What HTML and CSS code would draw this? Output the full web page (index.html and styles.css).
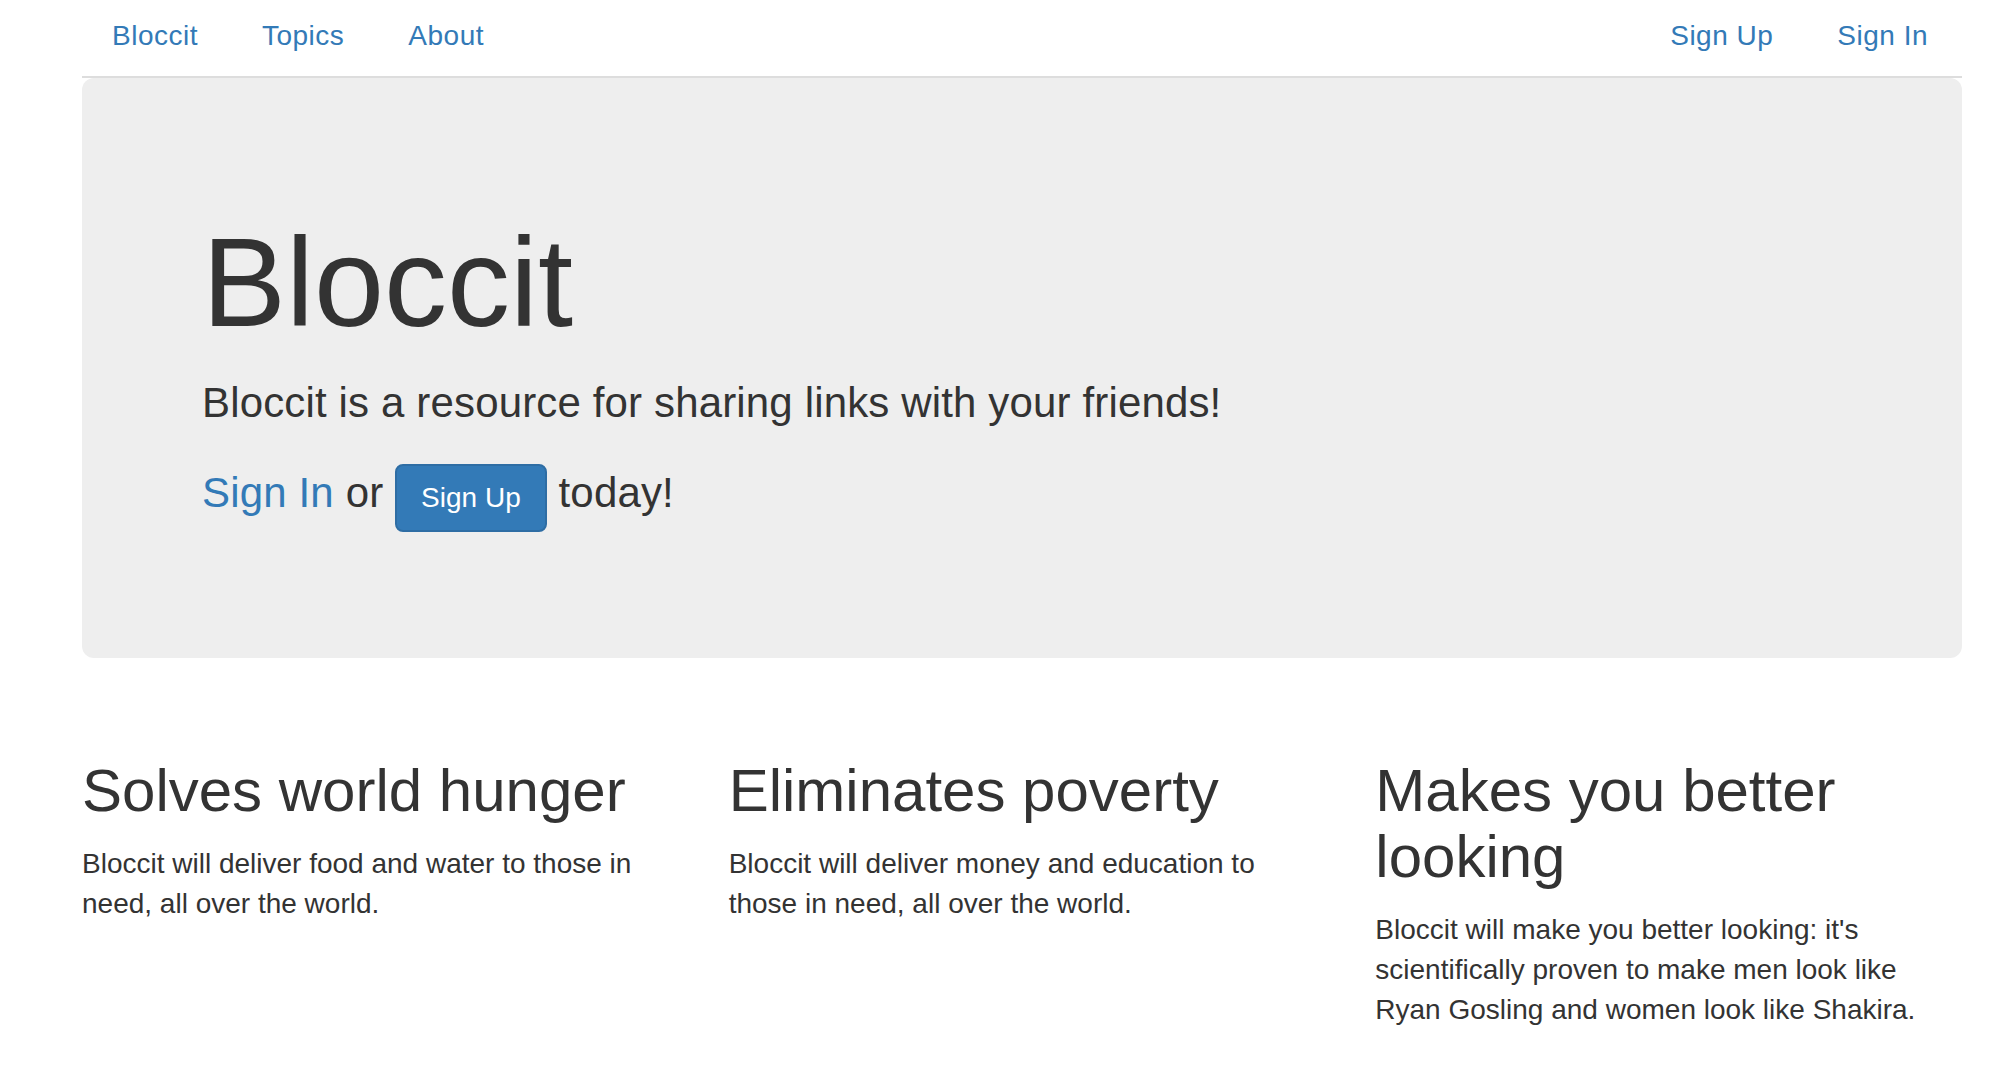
FILE: index.html
```html
<!DOCTYPE html>
<html lang="en">
<head>
<meta charset="utf-8">
<title>Bloccit</title>
<link rel="stylesheet" href="styles.css">
</head>
<body>
<div class="container">
  <ul class="nav">
    <li><a href="#">Bloccit</a></li>
    <li><a href="#">Topics</a></li>
    <li><a href="#">About</a></li>
    <li class="push"><a href="#">Sign Up</a></li>
    <li><a href="#">Sign In</a></li>
  </ul>

  <div class="jumbotron">
    <h1>Bloccit</h1>
    <p>Bloccit is a resource for sharing links with your friends!</p>
    <p><a href="#">Sign In</a> or <a href="#" class="btn">Sign Up</a> today!</p>
  </div>

  <div class="row">
    <div class="col">
      <h2>Solves world hunger</h2>
      <p>Bloccit will deliver food and water to those in need, all over the world.</p>
    </div>
    <div class="col">
      <h2>Eliminates poverty</h2>
      <p>Bloccit will deliver money and education to those in need, all over the world.</p>
    </div>
    <div class="col">
      <h2>Makes you better looking</h2>
      <p>Bloccit will make you better looking: it's scientifically proven to make men look like Ryan Gosling and women look like Shakira.</p>
    </div>
  </div>
</div>
</body>
</html>
```

FILE: styles.css
```css
* { box-sizing: border-box; }

html, body {
  margin: 0;
  padding: 0;
  background: #fff;
}

body {
  font-family: "Liberation Sans", Arial, sans-serif;
  font-size: 28px;
  line-height: 40px;
  color: #333;
}

a {
  color: #337ab7;
  text-decoration: none;
}

.container {
  width: 1940px;
  margin-left: 52px;
  padding: 0 30px;
}

.nav {
  list-style: none;
  margin: 0;
  padding: 0;
  display: flex;
  border-bottom: 2px solid #ddd;
}

.nav li {
  margin-right: 4px;
}

.nav li.push {
  margin-left: auto;
}

.nav a {
  display: block;
  padding: 16px 30px 20px;
  line-height: 40px;
  letter-spacing: 0.5px;
}

.jumbotron {
  background: #eee;
  border-radius: 12px;
  padding: 96px 120px;
  margin-bottom: 60px;
}

.jumbotron h1 {
  font-size: 126px;
  line-height: 1.1;
  font-weight: 400;
  margin: 40px 0 20px;
}

.jumbotron p {
  font-size: 42px;
  line-height: 60px;
  font-weight: 300;
  letter-spacing: 0.15px;
  margin: 0 0 30px;
}

.btn {
  display: inline-block;
  font-size: 28px;
  line-height: 40px;
  padding: 12px 24px;
  border: 2px solid #2e6da4;
  border-radius: 8px;
  background: #337ab7;
  color: #fff;
  letter-spacing: 0;
  vertical-align: baseline;
}

.row {
  display: grid;
  grid-template-columns: repeat(3, 1fr);
  margin: 0 -30px;
}

.col {
  padding: 0 30px;
}

.col h2 {
  font-size: 60px;
  line-height: 66px;
  font-weight: 400;
  margin: 40px 0 20px;
}

.col p {
  margin: 0 0 20px;
}
```
